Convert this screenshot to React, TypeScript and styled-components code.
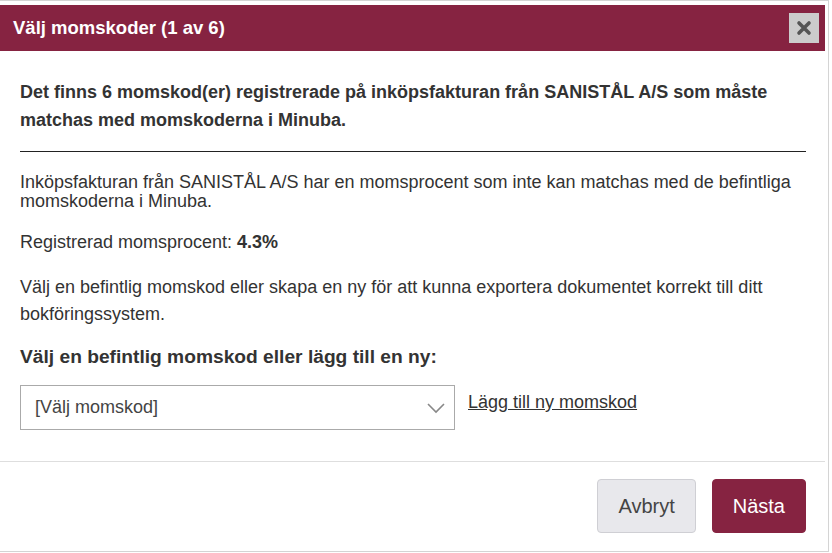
import React from 'react';
import styled, { createGlobalStyle } from 'styled-components';

const MAROON = '#862341';

const GlobalStyle = createGlobalStyle`
  html, body {
    margin: 0;
    padding: 0;
    background: #fff;
    font-family: 'Liberation Sans', Arial, sans-serif;
    color: #333;
  }
`;

const Dialog = styled.div`
  width: 829px;
  height: 552px;
  box-sizing: border-box;
  border-top: 1px solid #d4d4d4;
  border-right: 1px solid #d4d4d4;
  border-bottom: 1px solid #d4d4d4;
  padding: 4px 3px 0 0;
  display: flex;
  flex-direction: column;
  background: #fff;
`;

const Header = styled.div`
  height: 46px;
  background: ${MAROON};
  display: flex;
  align-items: center;
  justify-content: space-between;
  padding: 0 6px 0 13px;
`;

const Title = styled.h1`
  margin: 0;
  color: #fff;
  font-size: 18.5px;
  font-weight: bold;
`;

const CloseButton = styled.button`
  width: 30px;
  height: 30px;
  border: 0;
  padding: 0;
  background: #cccccc;
  display: flex;
  align-items: center;
  justify-content: center;
  cursor: pointer;
`;

const Body = styled.div`
  padding: 27px 19px 31px 20px;
  border-bottom: 1px solid #dedede;
`;

const Lead = styled.p`
  margin: 0;
  font-size: 18px;
  font-weight: bold;
  line-height: 28px;
`;

const Rule = styled.hr`
  margin: 17px 0 0;
  border: 0;
  border-top: 1px solid #222;
`;

const Text = styled.p<{ $gap: number; $lh: number; $size?: number; $bold?: boolean }>`
  margin: ${(p) => p.$gap}px 0 0;
  font-size: ${(p) => p.$size ?? 18}px;
  line-height: ${(p) => p.$lh}px;
  font-weight: ${(p) => (p.$bold ? 'bold' : 'normal')};
`;

const PickRow = styled.div`
  margin-top: 15px;
  display: flex;
  align-items: flex-start;
  gap: 13px;
`;

const Select = styled.div`
  width: 435px;
  height: 45px;
  box-sizing: border-box;
  border: 1px solid #aaa;
  display: flex;
  align-items: center;
  justify-content: space-between;
  padding: 0 8px 0 14px;
  font-size: 18px;
  color: #444;
`;

const AddLink = styled.a`
  margin-top: 7px;
  font-size: 18px;
  color: #333;
  text-decoration: underline;
  cursor: pointer;
`;

const Footer = styled.div`
  display: flex;
  justify-content: flex-end;
  gap: 16px;
  padding: 17px 19px 0 0;
`;

const Button = styled.button<{ $primary?: boolean }>`
  height: 54px;
  box-sizing: border-box;
  padding: 0 20px;
  font-family: 'Liberation Sans', Arial, sans-serif;
  font-size: 20px;
  border-radius: 4px;
  cursor: pointer;
  border: 1px solid ${(p) => (p.$primary ? MAROON : '#cfcfd4')};
  background: ${(p) => (p.$primary ? MAROON : '#e8e8ec')};
  color: ${(p) => (p.$primary ? '#fff' : '#444')};
`;

const Chevron = () => (
  <svg width="20" height="12" viewBox="0 0 20 12">
    <path d="M2 2 L10 10 L18 2" fill="none" stroke="#888" strokeWidth="1.6" />
  </svg>
);

const CloseIcon = () => (
  <svg width="16" height="16" viewBox="0 0 16 16">
    <path d="M3 3 L13 13 M13 3 L3 13" stroke="#555" strokeWidth="3.6" strokeLinecap="round" />
  </svg>
);

export default function App() {
  return (
    <>
      <GlobalStyle />
      <Dialog>
        <Header>
          <Title>Välj momskoder (1 av 6)</Title>
          <CloseButton aria-label="Stäng">
            <CloseIcon />
          </CloseButton>
        </Header>
        <Body>
          <Lead>
            Det finns 6 momskod(er) registrerade på inköpsfakturan från SANISTÅL A/S som måste
            matchas med momskoderna i Minuba.
          </Lead>
          <Rule />
          <Text $gap={21} $lh={19}>
            Inköpsfakturan från SANISTÅL A/S har en momsprocent som inte kan matchas med de
            befintliga momskoderna i Minuba.
          </Text>
          <Text $gap={21} $lh={21}>
            Registrerad momsprocent: <b>4.3%</b>
          </Text>
          <Text $gap={21} $lh={27}>
            Välj en befintlig momskod eller skapa en ny för att kunna exportera dokumentet korrekt
            till ditt bokföringssystem.
          </Text>
          <Text $gap={15} $lh={27} $size={19.2} $bold>
            Välj en befintlig momskod eller lägg till en ny:
          </Text>
          <PickRow>
            <Select>
              <span>[Välj momskod]</span>
              <Chevron />
            </Select>
            <AddLink>Lägg till ny momskod</AddLink>
          </PickRow>
        </Body>
        <Footer>
          <Button>Avbryt</Button>
          <Button $primary>Nästa</Button>
        </Footer>
      </Dialog>
    </>
  );
}
